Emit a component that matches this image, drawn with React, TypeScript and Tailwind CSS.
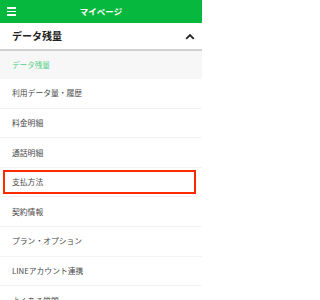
import React from "react";

const rows = ["利用データ量・履歴", "料金明細", "通話明細", "支払方法", "契約情報", "プラン・オプション", "LINEアカウント連携", "よくある質問"];

export default function App() {
  return (
    <div className="w-[202px] h-[300px] overflow-hidden bg-white" style={{ fontFamily: '"Noto Sans CJK JP", "Noto Sans", sans-serif' }}>
      <div className="h-[23px] bg-[#07b83f] flex items-center relative">
        <div className="absolute left-[7px] top-[7px] flex flex-col gap-[2px]">
          <div className="w-[9px] h-[1.5px] bg-white" />
          <div className="w-[9px] h-[1.5px] bg-white" />
          <div className="w-[9px] h-[1.5px] bg-white" />
        </div>
        <div className="flex-1 text-center text-white text-[8.5px] font-bold leading-none">マイページ</div>
      </div>
      <div className="h-[28px] flex items-center justify-between pl-[12px] pr-[6px] border-b-2 border-[#cfcfcf]">
        <span className="text-[10px] font-bold text-[#222] leading-none">データ残量</span>
        <svg width="10" height="7" viewBox="0 0 10 7" className="mr-[1px]">
          <path d="M1.2 5.8 L5 2 L8.8 5.8" fill="none" stroke="#222" strokeWidth="1.8" />
        </svg>
      </div>
      <div className="h-[28px] bg-[#f7f7f7] flex items-center pl-[12px]">
        <span className="text-[7.6px] text-[#52d085] leading-none">データ残量</span>
      </div>
      {rows.map((r, i) => (
        <div key={r} className="relative h-[29.6px] flex items-center pl-[12px] border-b border-[#f3f3f3]">
          <span className="text-[7.8px] text-[#4a4a4a] leading-none">{r}</span>
          {i === 3 && (
            <div className="absolute left-[3px] right-[6px] top-[2px] bottom-[2px] border-2 border-[#ff2a00]" />
          )}
        </div>
      ))}
    </div>
  );
}
